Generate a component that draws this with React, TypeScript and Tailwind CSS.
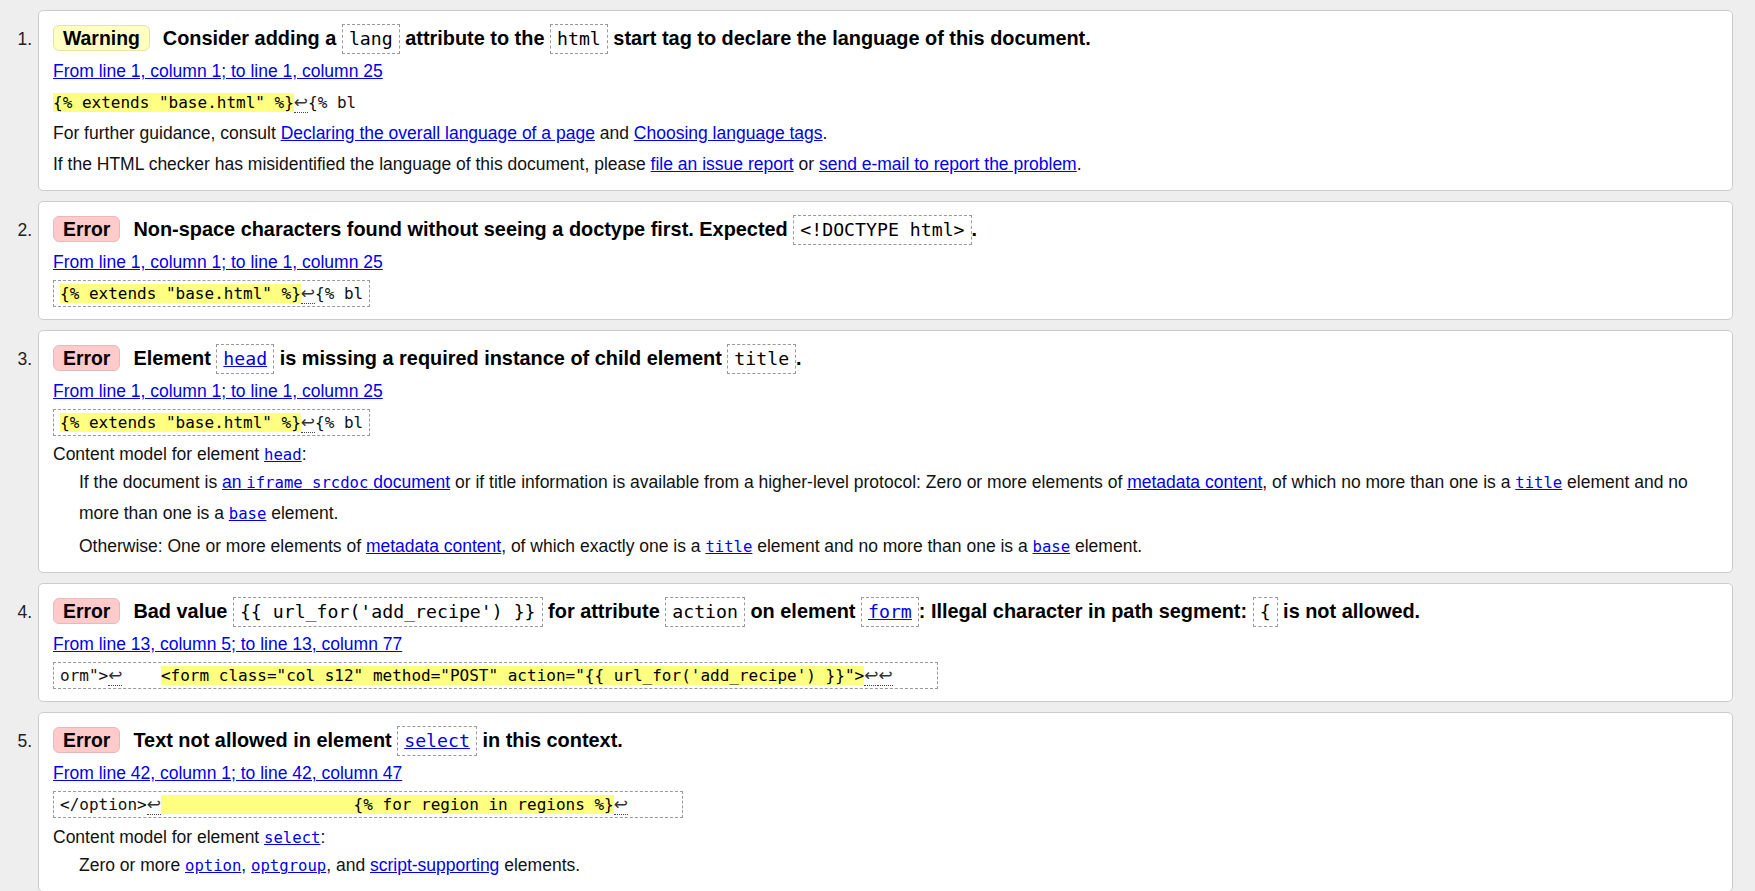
import React from 'react';

type Kids = { children: React.ReactNode };

const Link = ({ children, mono = false }: Kids & { mono?: boolean }) => (
  <a
    href="#"
    className={
      mono
        ? "text-[#0000ee] underline leading-none font-['DejaVu_Sans_Mono',monospace] text-[15.6px]"
        : 'text-[#0000ee] underline'
    }
  >
    {children}
  </a>
);

// dashed inline code box used in message headings
const Box = ({ children }: Kids) => (
  <code className="inline-block border border-dashed border-[#999] px-[6px] leading-[28px] font-normal text-[18.2px] font-['DejaVu_Sans_Mono',monospace]">
    {children}
  </code>
);

const Ret = () => (
  <span className="border-b border-dotted border-[#444] font-['DejaVu_Sans',sans-serif] text-[17px] leading-none text-[#333]">
    ↩
  </span>
);

const Hl = ({ children }: Kids) => <mark className="bg-[#ffff80] text-black">{children}</mark>;

const Badge = ({ kind }: { kind: 'Warning' | 'Error' }) => (
  <strong
    className={
      kind === 'Warning'
        ? 'inline-block mr-[13px] rounded-[6px] border border-[#e4e4a6] bg-[#ffffc4] px-[9px] text-[19.4px] leading-[24px]'
        : 'inline-block mr-[13px] rounded-[6px] border border-[#e8b9b9] bg-[#ffcaca] px-[9px] text-[19.4px] leading-[24px]'
    }
  >
    {kind}
  </strong>
);

const Heading = ({ kind, children }: { kind: 'Warning' | 'Error' } & Kids) => (
  <p className="text-[19.9px] font-bold leading-[30px] text-black">
    <Badge kind={kind} />
    {children}
  </p>
);

const Location = ({ children }: Kids) => (
  <p className="mt-[2px] leading-[31px]">
    <Link>{children}</Link>
  </p>
);

const Snippet = ({ children, boxed = true }: Kids & { boxed?: boolean }) => (
  <div className="leading-[31px]">
    <code
      className={
        boxed
          ? "inline-block whitespace-pre border border-dashed border-[#999] px-[6px] leading-[25px] text-[16px] font-['DejaVu_Sans_Mono',monospace] text-[#111]"
          : "inline-block whitespace-pre leading-[31px] text-[16px] font-['DejaVu_Sans_Mono',monospace] text-[#111]"
      }
    >
      {children}
    </code>
  </div>
);

const Message = ({ n, children }: { n: number } & Kids) => (
  <li className="flex items-baseline">
    <span className="w-[38px] shrink-0 pr-[6px] text-right text-[17.5px] text-[#222]">{n}.</span>
    <div className="flex-1 rounded-[5px] border border-[#cccccc] bg-white pl-[14px] pr-[14px] pt-[12px] pb-[10px]">
      {children}
    </div>
  </li>
);

export default function App() {
  return (
    <div className="min-h-screen bg-[#eeeeee] pt-[10px] pr-[22px] text-[17.5px] text-[#111] font-['Liberation_Sans',Arial,sans-serif]">
      <ol className="flex flex-col gap-[10px]">
        <Message n={1}>
          <Heading kind="Warning">
            Consider adding a <Box>lang</Box> attribute to the <Box>html</Box> start tag to declare the language of this
            document.
          </Heading>
          <Location>From line 1, column 1; to line 1, column 25</Location>
          <Snippet boxed={false}>
            <Hl>{'{% extends "base.html" %}'}</Hl>
            <Ret />
            {'{% bl'}
          </Snippet>
          <p className="leading-[31px]">
            For further guidance, consult <Link>Declaring the overall language of a page</Link> and{' '}
            <Link>Choosing language tags</Link>.
          </p>
          <p className="leading-[31px]">
            If the HTML checker has misidentified the language of this document, please <Link>file an issue report</Link>{' '}
            or <Link>send e-mail to report the problem</Link>.
          </p>
        </Message>

        <Message n={2}>
          <Heading kind="Error">
            Non-space characters found without seeing a doctype first. Expected <Box>{'<!DOCTYPE html>'}</Box>.
          </Heading>
          <Location>From line 1, column 1; to line 1, column 25</Location>
          <Snippet>
            <Hl>{'{% extends "base.html" %}'}</Hl>
            <Ret />
            {'{% bl'}
          </Snippet>
        </Message>

        <Message n={3}>
          <Heading kind="Error">
            Element{' '}
            <Box>
              <a href="#" className="text-[#0000ee] underline">
                head
              </a>
            </Box>{' '}
            is missing a required instance of child element <Box>title</Box>.
          </Heading>
          <Location>From line 1, column 1; to line 1, column 25</Location>
          <Snippet>
            <Hl>{'{% extends "base.html" %}'}</Hl>
            <Ret />
            {'{% bl'}
          </Snippet>
          <p className="mt-[4px] leading-[25px]">
            Content model for element <Link mono>head</Link>:
          </p>
          <div className="ml-[26px]">
            <p className="leading-[31px]">
              If the document is{' '}
              <a href="#" className="text-[#0000ee] underline">
                an <span className="font-['DejaVu_Sans_Mono',monospace] text-[15.6px] leading-none">iframe srcdoc</span>{' '}
                document
              </a>{' '}
              or if title information is available from a higher-level protocol: Zero or more elements of{' '}
              <Link>metadata content</Link>, of which no more than one is a <Link mono>title</Link> element and no more
              than one is a <Link mono>base</Link> element.
            </p>
            <p className="mt-[2px] leading-[31px]">
              Otherwise: One or more elements of <Link>metadata content</Link>, of which exactly one is a{' '}
              <Link mono>title</Link> element and no more than one is a <Link mono>base</Link> element.
            </p>
          </div>
        </Message>

        <Message n={4}>
          <Heading kind="Error">
            Bad value <Box>{"{{ url_for('add_recipe') }}"}</Box> for attribute <Box>action</Box> on element{' '}
            <Box>
              <a href="#" className="text-[#0000ee] underline">
                form
              </a>
            </Box>
            : Illegal character in path segment: <Box>{'{'}</Box> is not allowed.
          </Heading>
          <Location>From line 13, column 5; to line 13, column 77</Location>
          <Snippet>
            {'orm">'}
            <Ret />
            {'    '}
            <Hl>{'<form class="col s12" method="POST" action="{{ url_for(\'add_recipe\') }}">'}</Hl>
            <Ret />
            <Ret />
            {'    '}
          </Snippet>
        </Message>

        <Message n={5}>
          <Heading kind="Error">
            Text not allowed in element{' '}
            <Box>
              <a href="#" className="text-[#0000ee] underline">
                select
              </a>
            </Box>{' '}
            in this context.
          </Heading>
          <Location>From line 42, column 1; to line 42, column 47</Location>
          <Snippet>
            {'</option>'}
            <Ret />
            <Hl>{'                    {% for region in regions %}'}</Hl>
            <Ret />
            {'     '}
          </Snippet>
          <p className="mt-[5px] leading-[25px]">
            Content model for element <Link mono>select</Link>:
          </p>
          <div className="ml-[26px]">
            <p className="leading-[31px]">
              Zero or more <Link mono>option</Link>, <Link mono>optgroup</Link>, and <Link>script-supporting</Link>{' '}
              elements.
            </p>
          </div>
        </Message>
      </ol>
    </div>
  );
}
